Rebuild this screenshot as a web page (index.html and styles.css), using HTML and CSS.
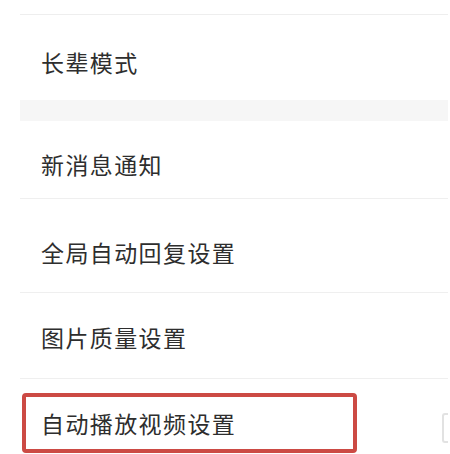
FILE: index.html
```html
<!DOCTYPE html>
<html lang="zh-CN">
<head>
<meta charset="utf-8">
<title>设置</title>
<link rel="stylesheet" href="styles.css">
</head>
<body>
<div class="list">
  <div class="row row-elder"><span class="label">长辈模式</span></div>
  <div class="gap"></div>
  <div class="row row-notify"><span class="label">新消息通知</span></div>
  <div class="row row-reply"><span class="label">全局自动回复设置</span></div>
  <div class="row row-image"><span class="label">图片质量设置</span></div>
  <div class="row row-video">
    <span class="label">自动播放视频设置</span>
    <span class="switch"></span>
    <span class="highlight"></span>
  </div>
</div>
</body>
</html>
```
FILE: styles.css
```css
html, body {
  margin: 0;
  padding: 0;
  background: #ffffff;
}
body {
  padding-top: 14px;
  font-family: "Noto Sans CJK SC", "Noto Sans", sans-serif;
  overflow: hidden;
  height: 454px;
  box-sizing: border-box;
}
.list {
  margin-left: 20px;
  margin-right: 2px;
  border-top: 1px solid #eeeeee;
}
.row {
  position: relative;
  box-sizing: border-box;
  display: flex;
  align-items: flex-start;
  justify-content: space-between;
  padding-left: 21px;
  border-bottom: 1px solid #efefef;
  background: #ffffff;
}
.label {
  font-size: 23px;
  line-height: 24px;
  letter-spacing: 1.4px;
  color: #2e2e2e;
}
.row-elder { height: 85px; padding-top: 35px; border-bottom: none; }
.gap { height: 21px; background: #f6f6f6; }
.row-notify { height: 78px; padding-top: 31px; }
.row-reply { height: 94px; padding-top: 41px; }
.row-image { height: 86px; padding-top: 32px; }
.row-video { height: 75px; padding-top: 32px; border-bottom: none; }
.switch {
  width: 6px;
  height: 30px;
  margin-top: 2px;
  border: 2px solid #e2e2e2;
  border-right: none;
  border-radius: 3px 0 0 3px;
  box-sizing: border-box;
}
.highlight {
  position: absolute;
  left: 2px;
  top: 14px;
  width: 335px;
  height: 60px;
  box-sizing: border-box;
  border: 4px solid #cc4a44;
  border-radius: 4px;
}
```
